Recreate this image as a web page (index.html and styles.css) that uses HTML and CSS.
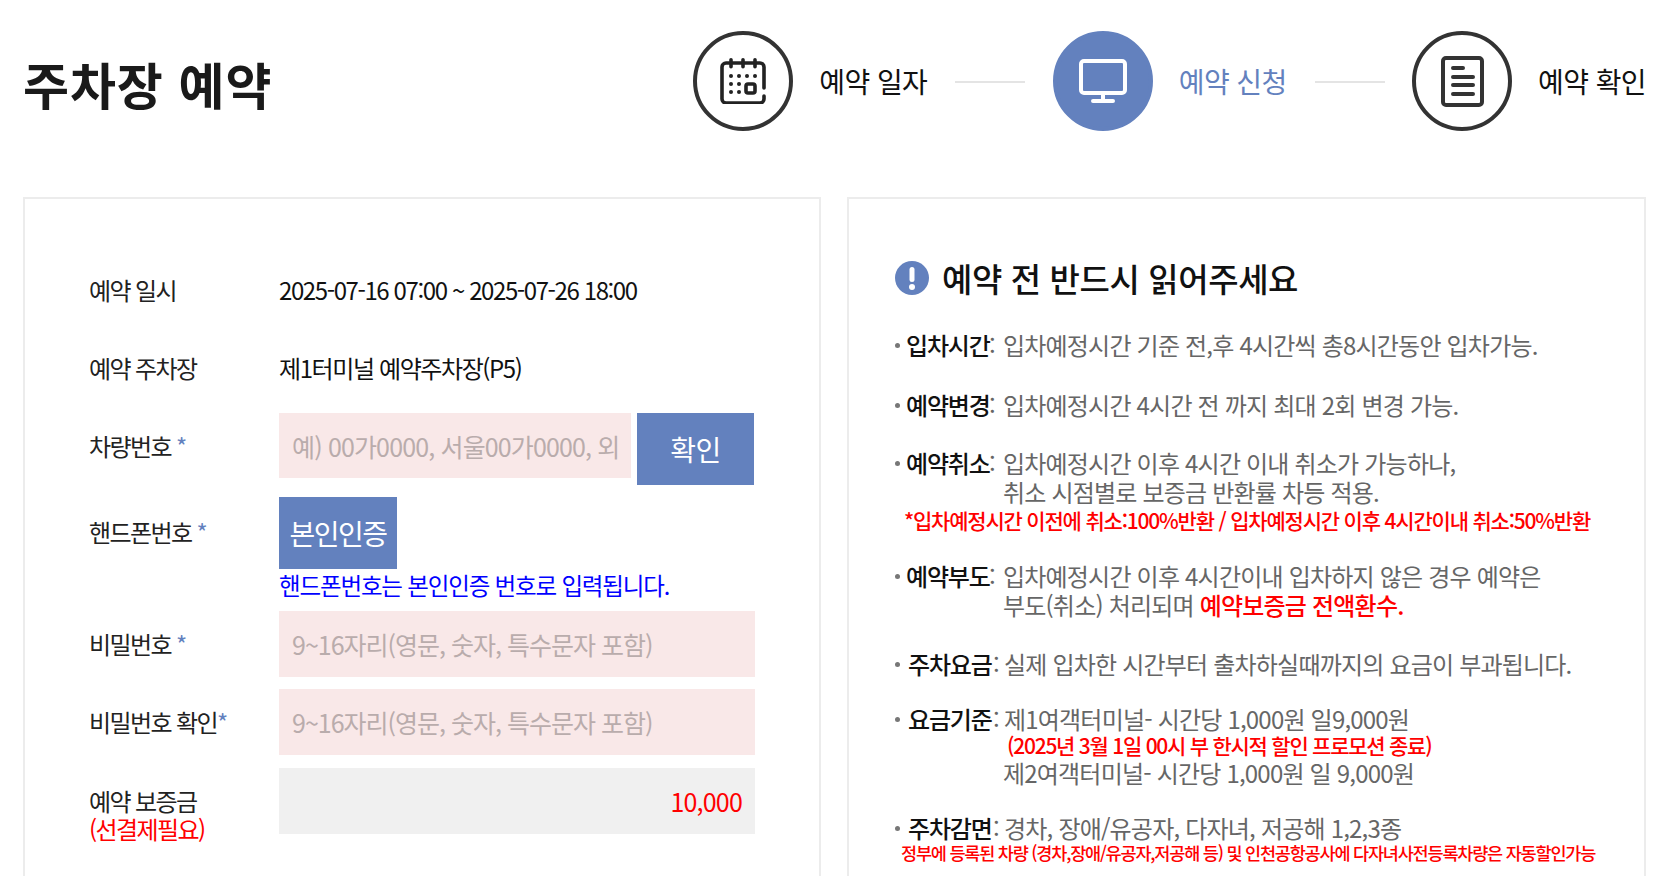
FILE: index.html
```html
<!DOCTYPE html>
<html lang="ko">
<head>
<meta charset="utf-8">
<title>주차장 예약</title>
<link rel="stylesheet" href="styles.css">
</head>
<body>
<div class="page">
  <header class="top">
    <h1 class="title">주차장 예약</h1>
    <ol class="steps">
      <li class="step">
        <span class="circle">
          <svg class="ic" width="46" height="46" viewBox="0 0 46 46" fill="none" stroke="#222" stroke-width="3.6" stroke-linecap="round">
            <path d="M44 30V9a4 4 0 0 0-4-4H6a4 4 0 0 0-4 4v32a4 4 0 0 0 4 4h34a4 4 0 0 0 4-4v-3"/>
            <path d="M11 1.8v7M23 1.8v7M35 1.8v7"/>
            <rect x="26" y="26" width="9" height="9" rx="2"/>
            <g fill="#222" stroke="none">
              <circle cx="11" cy="18" r="2"/><circle cx="19" cy="18" r="2"/><circle cx="27" cy="18" r="2"/><circle cx="35" cy="18" r="2"/>
              <circle cx="11" cy="26" r="2"/><circle cx="19" cy="26" r="2"/>
              <circle cx="11" cy="34" r="2"/><circle cx="19" cy="34" r="2"/>
            </g>
          </svg>
        </span>
        <span class="step-label">예약 일자</span>
      </li>
      <li class="step-line"></li>
      <li class="step step-on">
        <span class="circle circle-on">
          <svg width="48" height="44" viewBox="0 0 48 44" fill="none" stroke="#fff" stroke-width="4" stroke-linecap="round" stroke-linejoin="round">
            <rect x="2" y="2" width="44" height="32" rx="3"/>
            <path d="M24 35v6M14 42h20"/>
          </svg>
        </span>
        <span class="step-label">예약 신청</span>
      </li>
      <li class="step-line"></li>
      <li class="step">
        <span class="circle">
          <svg width="43" height="51" viewBox="0 0 43 51" fill="none" stroke="#333" stroke-width="4" stroke-linecap="round" stroke-linejoin="round">
            <rect x="2" y="2" width="39" height="47" rx="3"/>
            <path d="M12 12h10M12 21h20M12 29h20M12 38h20"/>
          </svg>
        </span>
        <span class="step-label">예약 확인</span>
      </li>
    </ol>
  </header>

  <main class="cards">
    <section class="card form-card">
      <div class="row row-text row-first">
        <div class="label">예약 일시</div>
        <div class="value">2025-07-16 07:00 ~ 2025-07-26 18:00</div>
      </div>
      <div class="row row-text row-second">
        <div class="label">예약 주차장</div>
        <div class="value">제1터미널 예약주차장(P5)</div>
      </div>
      <div class="row row-car">
        <div class="label label-field">차량번호 <span class="req">*</span></div>
        <div class="car-field">
          <div class="field field-car"><span class="ph ph-car">예) 00가0000, 서울00가0000, 외</span></div>
          <button class="btn btn-check" type="button">확인</button>
        </div>
      </div>
      <div class="row row-field">
        <div class="label label-phone">핸드폰번호 <span class="req">*</span></div>
        <div>
          <button class="btn btn-auth" type="button">본인인증</button>
          <p class="hint">핸드폰번호는 본인인증 번호로 입력됩니다.</p>
        </div>
      </div>
      <div class="row row-field">
        <div class="label label-field">비밀번호 <span class="req">*</span></div>
        <div class="field field-wide"><span class="ph">9~16자리(영문, 숫자, 특수문자 포함)</span></div>
      </div>
      <div class="row row-field">
        <div class="label label-field">비밀번호 확인<span class="req">*</span></div>
        <div class="field field-wide"><span class="ph">9~16자리(영문, 숫자, 특수문자 포함)</span></div>
      </div>
      <div class="row row-deposit">
        <div class="label label-field">예약 보증금<br><span class="red">(선결제필요)</span></div>
        <div class="field field-wide field-gray"><span class="amount">10,000</span></div>
      </div>
    </section>

    <section class="card notice-card">
      <h2 class="notice-title">
        <svg width="34" height="34" viewBox="0 0 34 34"><circle cx="17" cy="17" r="17" fill="#6381be"/><rect x="14.5" y="6" width="5" height="15" rx="2.5" fill="#fff"/><circle cx="17" cy="26" r="3" fill="#fff"/></svg>
        <span>예약 전 반드시 읽어주세요</span>
      </h2>
      <div class="item item-1">
        <div class="line"><b class="term">입차시간</b><span class="colon">:</span><span class="desc">입차예정시간 기준 전,후 4시간씩 총8시간동안 입차가능.</span></div>
      </div>
      <div class="item item-2">
        <div class="line"><b class="term">예약변경</b><span class="colon">:</span><span class="desc">입차예정시간 4시간 전 까지 최대 2회 변경 가능.</span></div>
      </div>
      <div class="item item-3">
        <div class="line"><b class="term">예약취소</b><span class="colon">:</span><span class="desc">입차예정시간 이후 4시간 이내 취소가 가능하나,</span></div>
        <div class="line line-indent">취소 시점별로 보증금 반환률 차등 적용.</div>
        <div class="note note-a">*입차예정시간 이전에 취소:100%반환 / 입차예정시간 이후 4시간이내 취소:50%반환</div>
      </div>
      <div class="item item-4">
        <div class="line"><b class="term">예약부도</b><span class="colon">:</span><span class="desc">입차예정시간 이후 4시간이내 입차하지 않은 경우 예약은</span></div>
        <div class="line line-indent">부도(취소) 처리되며 <b class="strong-red">예약보증금 전액환수.</b></div>
      </div>
      <div class="item item-5">
        <div class="line"><b class="term term-wide">주차요금</b><span class="colon">:</span><span class="desc desc-wide">실제 입차한 시간부터 출차하실때까지의 요금이 부과됩니다.</span></div>
      </div>
      <div class="item item-6">
        <div class="line"><b class="term term-wide">요금기준</b><span class="colon">:</span><span class="desc desc-wide">제1여객터미널- 시간당 1,000원 일9,000원</span></div>
        <div class="note note-b">(2025년 3월 1일 00시 부 한시적 할인 프로모션 종료)</div>
        <div class="line line-indent">제2여객터미널- 시간당 1,000원 일 9,000원</div>
      </div>
      <div class="item item-7">
        <div class="line"><b class="term term-wide">주차감면</b><span class="colon">:</span><span class="desc desc-wide">경차, 장애/유공자, 다자녀, 저공해 1,2,3종</span></div>
        <div class="note note-c">정부에 등록된 차량 (경차,장애/유공자,저공해 등) 및 인천공항공사에 다자녀사전등록차량은 자동할인가능</div>
      </div>
    </section>
  </main>
</div>
</body>
</html>
```
FILE: styles.css
```css
* { box-sizing: border-box; }
html, body { margin: 0; height: 876px; overflow: hidden; background: #fff; }
body { font-family: "Noto Sans CJK KR", "Noto Sans", sans-serif; color: #111; }
.page { padding: 0 34px 0 23px; }

.top { height: 197px; display: flex; justify-content: space-between; align-items: flex-start; }
.title { margin: 50px 0 0; font-size: 50px; line-height: 66px; font-weight: 700; letter-spacing: .9px; color: #1a1a1a; }
.steps { list-style: none; margin: 31px 0 0; padding: 0; display: flex; align-items: center; }
.step { display: flex; align-items: center; gap: 26px; }
.circle { width: 100px; height: 100px; border-radius: 50%; border: 4px solid #333; display: flex; align-items: center; justify-content: center; flex: none; }
.circle-on { background: #6381be; border-color: #6381be; }
.step-label { font-size: 28px; line-height: 40px; letter-spacing: -.6px; color: #111; }
.step-on .step-label { color: #6381be; }
.step-line { width: 70px; height: 2px; margin: 2px 27.5px 0 28px; background: #e4e4e4; }

.cards { display: grid; grid-template-columns: 798px 799px; gap: 26px; }
.card { height: 760px; border: 2px solid #ececec; border-bottom: 0; }

.form-card { padding: 77px 0 0 64px; }
.row { display: flex; }
.label { width: 190px; flex: none; font-size: 24px; line-height: 28px; letter-spacing: -1.6px; color: #222; }
.value { font-size: 24px; line-height: 28px; letter-spacing: -1.4px; color: #111; }
.row-second { margin-top: 50px; }
.row-car { margin-top: 31px; }
.row-field { margin-top: 12px; }
.row-deposit { margin-top: 13px; }
.label-field { padding-top: 19px; }
.label-phone { padding-top: 21px; }
.req { color: #6381be; }
.red { color: #f00; }
.car-field { display: flex; align-items: flex-start; gap: 6px; }
.field { height: 66px; background: #f9e8e8; display: flex; align-items: center; padding: 0 13px; font-size: 25px; }
.field-car { width: 352px; height: 65px; white-space: nowrap; overflow: hidden; }
.field-wide { width: 476px; }
.field-gray { background: #f0f0f0; justify-content: flex-end; }
.ph { color: #b9acac; letter-spacing: -1px; }
.ph-car { letter-spacing: -.85px; }
.amount { color: #f00; letter-spacing: -.8px; }
.btn { display: block; height: 72px; border: 0; padding: 0; margin: 0; background: #6381be; color: #fff; font: inherit; font-size: 28px; letter-spacing: -.5px; }
.btn-check { width: 117px; }
.btn-auth { width: 118px; letter-spacing: -1.5px; }
.hint { margin: 2px 0 0; font-size: 23.5px; line-height: 28px; letter-spacing: -1.15px; color: #00f; }

.notice-card { padding: 0 0 0 46px; position: relative; }
.notice-title { margin: 62px 0 0; display: flex; align-items: center; gap: 13px; font-size: 33px; line-height: 34px; font-weight: 500; letter-spacing: -.4px; color: #111; }
.item { color: #666; font-size: 24px; letter-spacing: -.8px; }
.line { line-height: 29px; white-space: nowrap; display: flex; }
.line::before { content: ""; width: 5px; height: 5px; border-radius: 50%; background: #777; margin: 13px 6px 0 0; flex: none; }
.line-indent::before { content: none; }
.line-indent { padding-left: 108px; display: block; }
.term { font-weight: 500; color: #111; width: 83px; flex: none; letter-spacing: -1.2px; }
.term-wide { width: 85px; margin-left: 2px; }
.colon { width: 14px; flex: none; }
.desc-wide { margin-left: -3px; }
.strong-red { color: #f00; font-weight: 500; }
.note { color: #f00; font-weight: 500; white-space: nowrap; }
.note-a { margin-top: 1px; font-size: 21px; line-height: 26px; letter-spacing: -1.2px; padding-left: 9px; }
.note-b { margin-top: -1px; font-size: 21px; line-height: 26px; letter-spacing: -1.25px; padding-left: 112px; }
.note-c { font-size: 17.5px; line-height: 22px; letter-spacing: -1.2px; padding-left: 6px; }
.item-1 { margin-top: 35px; }
.item-2 { margin-top: 31px; }
.item-3 { margin-top: 29px; }
.item-4 { margin-top: 28px; }
.item-5 { margin-top: 30px; }
.item-6 { margin-top: 26px; }
.item-7 { margin-top: 26px; }
```
